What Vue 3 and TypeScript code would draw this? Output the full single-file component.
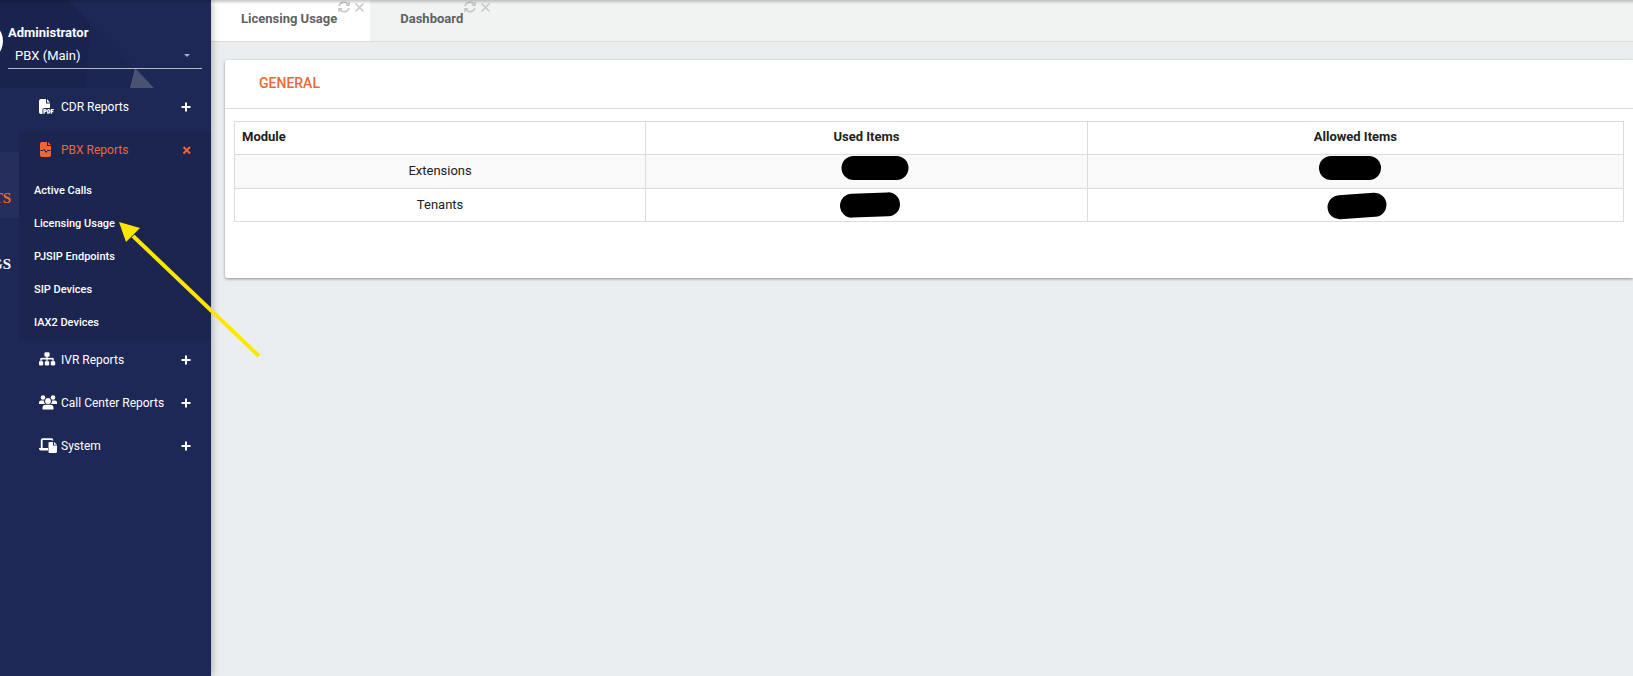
<script setup lang="ts">
import { ref } from 'vue'

interface MenuItem {
  label: string
  icon: 'pdf' | 'wave' | 'sitemap' | 'users' | 'system'
  children?: string[]
}
interface Mask {
  width: number
  height: number
  shift: number
  top: number
  angle: number
}
interface Row {
  module: string
  used: Mask
  allowed: Mask
}

const tenant = ref('PBX (Main)')
const activeTab = ref('Licensing Usage')
const open = ref('PBX Reports')
const tabs = ['Licensing Usage', 'Dashboard']

const menu: MenuItem[] = [
  { label: 'CDR Reports', icon: 'pdf' },
  {
    label: 'PBX Reports',
    icon: 'wave',
    children: ['Active Calls', 'Licensing Usage', 'PJSIP Endpoints', 'SIP Devices', 'IAX2 Devices'],
  },
  { label: 'IVR Reports', icon: 'sitemap' },
  { label: 'Call Center Reports', icon: 'users' },
  { label: 'System', icon: 'system' },
]

const rows: Row[] = [
  {
    module: 'Extensions',
    used: { width: 67, height: 24, shift: 9, top: 1, angle: 0 },
    allowed: { width: 62, height: 24, shift: -5, top: 1, angle: 0 },
  },
  {
    module: 'Tenants',
    used: { width: 60, height: 24, shift: 4, top: 4, angle: -2 },
    allowed: { width: 59, height: 24, shift: 2, top: 5, angle: -4 },
  },
]

function maskStyle(m: Mask) {
  return {
    width: `${m.width}px`,
    height: `${m.height}px`,
    top: `${m.top}px`,
    marginLeft: `${m.shift}px`,
    transform: `translateX(-50%) rotate(${m.angle}deg)`,
  }
}
</script>

<template>
  <div class="app">
    <aside class="sidebar">
      <header class="profile">
        <svg class="facets" viewBox="0 0 211 88" aria-hidden="true">
          <path d="M0 0H68L90 24L86 88H0Z" fill="#1b244c" />
          <path d="M0 0H68L135 68L130 88H0Z" fill="#1b2450" opacity=".45" />
          <path d="M135 68L154 88H130Z" fill="#4a5272" />
        </svg>
        <span class="avatar"></span>
        <div class="who">
          <label class="name" for="tenant">Administrator</label>
          <div class="select-wrap">
            <select id="tenant" v-model="tenant">
              <option>PBX (Main)</option>
            </select>
            <span class="caret"></span>
          </div>
        </div>
      </header>

      <div class="body">
        <nav class="rail" aria-label="Sections">
          <a href="#reports" class="rail-item active">TS</a>
          <a href="#settings" class="rail-item">GS</a>
        </nav>

        <nav class="menu" aria-label="Reports">
          <div v-for="item in menu" :key="item.label" class="group" :class="{ open: open === item.label }">
            <button
              type="button"
              class="entry"
              :aria-expanded="open === item.label"
              @click="open = open === item.label ? '' : item.label"
            >
              <svg v-if="item.icon === 'pdf'" class="icon" viewBox="0 0 18 16" aria-hidden="true">
                <path fill="currentColor" d="M2 0H7V4.5H11V9H5L3.500 10V15H2Q0 15 0 13V2Q0 0 2 0ZM8 0L11 3.500H8Z" />
                <path
                  fill="none"
                  stroke="currentColor"
                  stroke-width="1.3"
                  d="M5 14.800V10.700H6.300Q7.300 10.700 7.300 11.600T6.300 12.700H5M8.800 10.700V14.200H9.300Q10.900 14.200 10.900 12.400T9.300 10.700H8.800M12.400 14.800V10.700H14.800M12.400 12.700H14.300"
                />
              </svg>
              <svg v-else-if="item.icon === 'wave'" class="icon" viewBox="0 0 18 16" aria-hidden="true">
                <path fill="currentColor" d="M3 0H8V4H12V13Q12 15 10 15H3Q1 15 1 13V2Q1 0 3 0ZM9 0L12 3H9Z" />
                <path fill="none" stroke="#1c2550" stroke-width="1" d="M1.500 8.500H4L5.200 7.200L7 10.500L8.400 8.500H11.500" />
              </svg>
              <svg v-else-if="item.icon === 'sitemap'" class="icon" viewBox="0 -20 720 640" aria-hidden="true">
                <path
                  fill="currentColor"
                  stroke="currentColor"
                  stroke-width="16"
                  d="M128 352H32c-17.670 0-32 14.330-32 32v96c0 17.670 14.330 32 32 32h96c17.670 0 32-14.330 32-32v-96c0-17.670-14.330-32-32-32zm-24-80h192v48h48v-48h192v48h48v-57.590c0-21.170-17.230-38.410-38.410-38.410H344v-64h40c17.670 0 32-14.330 32-32V32c0-17.670-14.330-32-32-32H256c-17.670 0-32 14.330-32 32v96c0 17.670 14.330 32 32 32h40v64H94.410C73.230 224 56 241.230 56 262.410V320h48v-48zm264 80h-96c-17.670 0-32 14.330-32 32v96c0 17.670 14.330 32 32 32h96c17.670 0 32-14.330 32-32v-96c0-17.670-14.330-32-32-32zm240 0h-96c-17.670 0-32 14.330-32 32v96c0 17.670 14.330 32 32 32h96c17.670 0 32-14.330 32-32v-96c0-17.670-14.330-32-32-32z"
                />
              </svg>
              <svg v-else-if="item.icon === 'users'" class="icon" viewBox="0 0 18 16" aria-hidden="true">
                <g fill="currentColor">
                  <circle cx="4" cy="2.500" r="2.300" />
                  <circle cx="14" cy="2.500" r="2.300" />
                  <circle cx="9" cy="6" r="2.900" />
                  <path
                    d="M0 9V7.500Q0 5.500 2 5.500H4.800Q5 8 6.400 9ZM18 9V7.500Q18 5.500 16 5.500H13.200Q13 8 11.600 9ZM3.500 14.500V13Q3.500 9.800 7 9.800H11Q14.500 9.800 14.500 13V14.500Z"
                  />
                </g>
              </svg>
              <svg v-else class="icon" viewBox="0 0 18 16" aria-hidden="true">
                <path fill="none" stroke="currentColor" stroke-width="1.800" d="M2.700 10V2.200Q2.700 1.200 3.700 1.200H12.500Q13.500 1.200 13.500 2.500" />
                <path fill="currentColor" d="M0 10H9V12.500H2Q0 12.500 0 10.500ZM10.500 4H14V7.500H18V13.500Q18 15 16.500 15H10.500Q9.500 15 9.500 14V5Q9.500 4 10.500 4ZM15 4L18 6.700H15Z" />
              </svg>
              <span class="text">{{ item.label }}</span>
              <svg class="toggle" viewBox="0 0 10 10" aria-hidden="true">
                <path
                  fill="none"
                  stroke="currentColor"
                  stroke-width="2"
                  :d="open === item.label ? 'M2.500 2L9 8.500M9 2L2.500 8.500' : 'M0.500 5H9.500M5 0.500V9.500'"
                />
              </svg>
            </button>
            <ul v-if="item.children && open === item.label" class="sub">
              <li v-for="child in item.children" :key="child">
                <a href="#">{{ child }}</a>
              </li>
            </ul>
          </div>
        </nav>
      </div>
    </aside>

    <main class="main">
      <div class="tabs">
        <div v-for="tab in tabs" :key="tab" class="tab" :class="{ current: tab === activeTab }">
          <button type="button" class="tab-label" @click="activeTab = tab">{{ tab }}</button>
          <div class="tab-tools">
            <button type="button" :aria-label="`Reload ${tab}`">
              <svg width="12" height="12" viewBox="0 0 12 12" aria-hidden="true">
                <path fill="none" stroke="currentColor" stroke-width="1.600" d="M1 5A5 5 0 0 1 9.800 3.200M11 7A5 5 0 0 1 2.200 8.800" />
                <path fill="currentColor" d="M11.800 0.400V5H7.200ZM0.200 11.600V7H4.800Z" />
              </svg>
            </button>
            <button type="button" :aria-label="`Close ${tab}`">
              <svg width="9" height="12" viewBox="0 0 9 12" aria-hidden="true">
                <path fill="none" stroke="currentColor" stroke-width="1.500" d="M0.500 2.500L8.500 10.500M8.500 2.500L0.500 10.500" />
              </svg>
            </button>
          </div>
        </div>
      </div>

      <section class="card">
        <h2>GENERAL</h2>
        <div class="card-body">
          <table>
            <colgroup>
              <col class="c1" />
              <col class="c2" />
              <col class="c3" />
            </colgroup>
            <thead>
              <tr>
                <th scope="col" class="first">Module</th>
                <th scope="col">Used Items</th>
                <th scope="col">Allowed Items</th>
              </tr>
            </thead>
            <tbody>
              <tr v-for="row in rows" :key="row.module">
                <td>{{ row.module }}</td>
                <td><span class="mask" :style="maskStyle(row.used)"></span></td>
                <td><span class="mask" :style="maskStyle(row.allowed)"></span></td>
              </tr>
            </tbody>
          </table>
        </div>
      </section>
    </main>

    <svg class="pointer" width="150" height="142" viewBox="0 0 150 142" aria-hidden="true">
      <path d="M15 15L141 135" stroke="#ffe600" stroke-width="4" />
      <path d="M1 1L22 7L8 21Z" fill="#ffe600" />
    </svg>
  </div>
</template>

<style>
body {
  margin: 0;
  background: #eaeef1;
}
</style>

<style scoped>
* {
  box-sizing: border-box;
}
.app {
  position: relative;
  display: flex;
  min-height: 100vh;
  overflow: hidden;
  font-family: Roboto, "Liberation Sans", sans-serif;
  font-size: 13px;
  color: #212121;
}
button {
  padding: 0;
  border: 0;
  background: none;
  font: inherit;
  color: inherit;
  cursor: pointer;
}
a {
  color: inherit;
  text-decoration: none;
}
.sidebar {
  position: relative;
  z-index: 1;
  flex: 0 0 211px;
  display: flex;
  flex-direction: column;
  background: #1e2856;
  color: #fff;
  box-shadow: 0 0 8px rgba(0, 0, 0, 0.35);
}
.profile {
  position: relative;
  height: 88px;
  padding: 24px 9px 0 8px;
  overflow: hidden;
}
.facets {
  position: absolute;
  inset: 0;
  width: 100%;
  height: 100%;
}
.avatar {
  position: absolute;
  left: -37px;
  top: 21px;
  width: 40px;
  height: 40px;
  border-radius: 50%;
  background: #fff;
}
.who {
  position: relative;
}
.name {
  display: block;
  font-weight: 700;
  line-height: 18px;
}
.select-wrap {
  position: relative;
  border-bottom: 1px solid #b4b7c4;
}
select {
  display: block;
  width: 100%;
  height: 26px;
  padding: 1px 7px 0;
  border: 0;
  appearance: none;
  background: transparent;
  color: #fff;
  font: inherit;
}
.caret {
  position: absolute;
  right: 12px;
  top: 12px;
  border: 3px solid transparent;
  border-top-color: #a9adbd;
  border-bottom: 0;
  pointer-events: none;
}
.body {
  flex: 1;
  display: flex;
}
.rail {
  width: 19px;
  padding-top: 64px;
}
.rail-item {
  display: flex;
  justify-content: flex-end;
  align-items: flex-end;
  height: 66px;
  padding: 0 8px 11px 0;
  overflow: hidden;
  font: 700 15px/18px "Liberation Serif", serif;
}
.rail-item.active {
  color: #eb6834;
  background: #262f5c;
}
.menu {
  flex: 1;
}
.group.open {
  background: #1c2550;
}
.entry {
  display: flex;
  align-items: center;
  width: 100%;
  height: 43px;
  padding: 0 20px 5px;
  font-size: 12px;
  text-align: left;
}
.group.open .entry {
  color: #eb6834;
}
.icon {
  width: 18px;
  height: 16px;
}
.text {
  flex: 1;
  padding-left: 4px;
  white-space: nowrap;
}
.toggle {
  width: 10px;
  height: 10px;
}
.sub {
  margin: 0;
  padding: 0 0 2px;
  list-style: none;
}
.sub a {
  display: block;
  padding-left: 15px;
  font-size: 11px;
  font-weight: 500;
  line-height: 33px;
}
.main {
  flex: 1;
  min-width: 0;
}
.tabs {
  display: flex;
  height: 42px;
  border-bottom: 1px solid #d9dbdc;
  background: #f1f3f2;
}
.tab {
  position: relative;
  padding: 0 33px 0 30px;
  color: #5f6163;
}
.tab.current {
  background: #fff;
}
.tab-label {
  height: 37px;
  font-weight: 700;
}
.tab-tools {
  position: absolute;
  top: 1px;
  right: 6px;
  display: flex;
  gap: 5px;
  color: #c6c6c6;
}
.tab-tools svg {
  display: block;
}
.app::after {
  content: "";
  position: absolute;
  z-index: 3;
  inset: 0 0 auto;
  height: 4px;
  background: linear-gradient(rgba(0, 0, 0, 0.22), transparent);
  pointer-events: none;
}
.card {
  margin: 18px 0 0 14px;
  border-radius: 2px 0 0 2px;
  background: #fff;
  box-shadow: 0 1px 3px rgba(0, 0, 0, 0.4);
}
h2 {
  margin: 0;
  padding: 0 34px 2px;
  border-bottom: 1px solid #d9dbdc;
  font-size: 14px;
  font-weight: 500;
  line-height: 46px;
  color: #eb6834;
}
.card-body {
  padding: 12px 9px 56px;
}
table {
  width: 100%;
  border-collapse: collapse;
  table-layout: fixed;
}
.c1 {
  width: 29.600%;
}
.c2 {
  width: 31.800%;
}
th,
td {
  position: relative;
  height: 33px;
  padding: 0 7px 2px;
  border: 1px solid #dcdcdd;
  text-align: center;
}
th {
  padding-bottom: 4px;
  font-weight: 700;
}
th.first {
  text-align: left;
}
tbody tr:nth-child(odd) {
  background: #f9f9f9;
}
tbody tr:nth-child(odd) td {
  height: 34px;
}
.mask {
  position: absolute;
  left: 50%;
  border-radius: 12px;
  background: #000;
}
.pointer {
  position: absolute;
  z-index: 2;
  left: 118px;
  top: 221px;
  pointer-events: none;
}
</style>
